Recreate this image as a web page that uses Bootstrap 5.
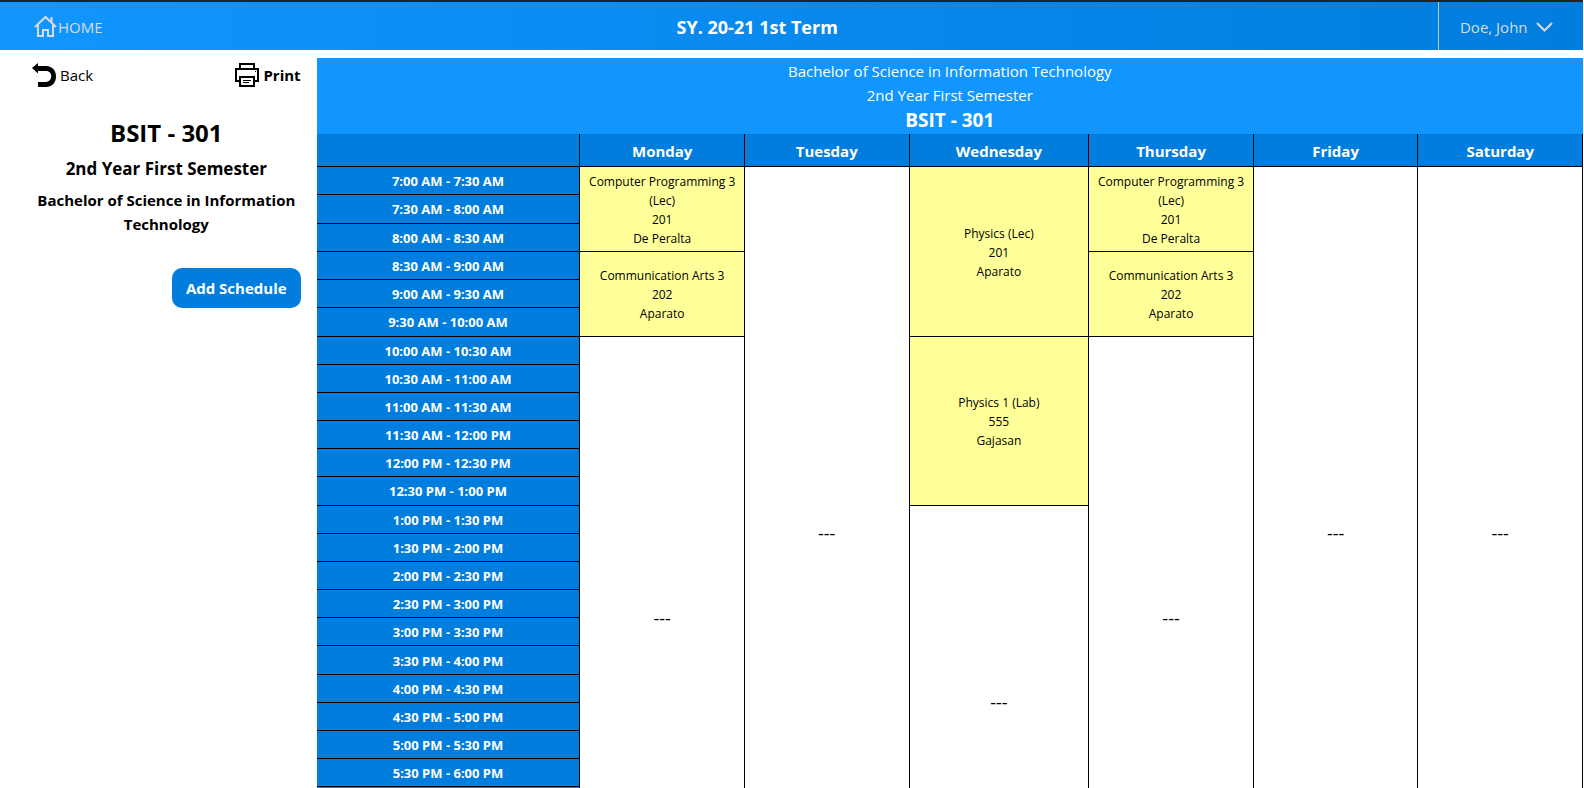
<!DOCTYPE html>
<html lang="en">
<head>
<meta charset="utf-8">
<meta name="viewport" content="width=device-width, initial-scale=1">
<title>Class Schedule</title>
<link href="https://cdn.jsdelivr.net/npm/bootstrap@5.3.0/dist/css/bootstrap.min.css" rel="stylesheet">
<style>
  :root { --brand: #007ddd; --brand-light: #1195ff; --slot: #ffff99; }
  html { scrollbar-width: none; }
  body { font-family: "Open Sans", "Noto Sans", sans-serif; font-size: 15px; line-height: 24px; color: #000; padding-right: 1px; }
  a, a:hover { color: inherit; text-decoration: none; }
  .topbar { height: 50px; padding-top: 2px; background: linear-gradient(to right, var(--brand-light), var(--brand)); border-top: 2px solid #1f2328; color: #d6dce2; }
  .home-side { width: 248px; padding-left: 33px; }
  .user-side { width: 20%; margin-top: -2px; }
  .term { font-size: 18px; }
  .user-menu { border-left: 1px solid #b9c4cf; color: inherit; background: none; width: 145px; padding: 2px 30px 0 21px; }
  .sidebar { width: 20%; padding: 5px 16px 16px 32px; }
  .section-name { font-size: 24px; line-height: 28px; margin-bottom: 11px; }
  .section-year { font-size: 17px; line-height: 22px; }
  .btn-schedule { background: var(--brand); color: #fff; font-size: 15px; line-height: 24px; border-radius: 10px; padding: 8px 14px; border: 0; }
  .title-block { background: var(--brand-light); color: #fff; padding-top: 1px; }
  .title-block .code { font-size: 19px; line-height: 27px; }
  .timetable { width: 100%; table-layout: fixed; border-collapse: collapse; text-align: center; height: 766px; }
  .timetable th, .timetable td { border: 1px solid #000; vertical-align: middle; padding: 2px 4px 0; }
  .timetable td { font-size: 18px; padding: 0 4px; }
  .timetable tr > th:first-child { border-left: 0; }
  .timetable thead th { height: 32px; border-top: 0; background: var(--brand); color: #fff; font-size: 15px; }
  .timetable tbody th { height: 28px; background: var(--brand); color: #fff; font-size: 13px; line-height: 19px; }
  .timetable td.slot { background: var(--slot); font-size: 12px; line-height: 19px; padding: 5px 4px 3px; }
  .col-time { width: 20.8%; }
  .col-day { width: 13%; }
  .col-day-wide { width: 14.2%; }
</style>
</head>
<body>
<header class="topbar d-flex align-items-stretch justify-content-between">
  <div class="home-side d-flex align-items-center">
    <a href="#" class="d-flex align-items-center">
      <svg width="25" height="24" viewBox="0 0 25 24" fill="none" stroke="currentColor" stroke-width="2" aria-hidden="true"><path d="M2 12 12.500 2 23 12M5 10v11h5v-6h5v6h5V10M18.500 2v5"/></svg>HOME</a>
  </div>
  <div class="term fw-bold text-white align-self-center">SY. 20-21 1st Term</div>
  <div class="user-side d-flex justify-content-end">
    <button type="button" class="user-menu border-top-0 border-end-0 border-bottom-0 d-flex align-items-center justify-content-between">Doe, John
      <svg width="17" height="12" viewBox="0 0 17 12" fill="none" stroke="currentColor" stroke-width="2" aria-hidden="true"><path d="M1 2l7.500 7.500L16 2"/></svg></button>
  </div>
</header>
<div class="d-flex pt-2">
  <aside class="sidebar flex-shrink-0">
    <div class="d-flex justify-content-between">
      <a href="#" class="d-flex align-items-center gap-1">
        <svg width="24" height="24" viewBox="0 0 24 24" aria-hidden="true"><path d="M0 5 6 0v3h9c12 1 12 20 0 21H6v-5h8c7-1 7-11 0-11H6v2.500z"/></svg>Back</a>
      <a href="#" class="d-flex align-items-center gap-1 fw-bold">
        <svg width="24" height="24" viewBox="0 0 24 24" fill="none" stroke="#000" stroke-width="2" aria-hidden="true"><path d="M5 6V1h14v5M5 18H1V6h22v12h-4M5 14h14v9H5z"/><path d="M8 17.500h8M8 19.500h6M20 8.500h1" stroke-width="1"/></svg>Print</a>
    </div>
    <div class="text-center fw-bold mt-4 pt-2">
      <h1 class="section-name fw-bold">BSIT - 301</h1>
      <h2 class="section-year fw-bold mb-2">2nd Year First Semester</h2>
      <div>Bachelor of Science in Information Technology</div>
    </div>
    <div class="text-end mt-4 pt-2"><button type="button" class="btn btn-schedule fw-bold">Add Schedule</button></div>
  </aside>
  <main class="flex-grow-1">
    <div class="title-block text-center">
      <div>Bachelor of Science in Information Technology</div>
      <div>2nd Year First Semester</div>
      <div class="code fw-bold">BSIT - 301</div>
    </div>
    <table class="timetable">
      <colgroup><col class="col-time"><col class="col-day"><col class="col-day"><col class="col-day-wide"><col class="col-day"><col class="col-day"><col class="col-day"></colgroup>
      <thead><tr><th></th><th scope="col">Monday</th><th scope="col">Tuesday</th><th scope="col">Wednesday</th><th scope="col">Thursday</th><th scope="col">Friday</th><th scope="col">Saturday</th></tr></thead>
      <tbody>
        <tr><th scope="row">7:00 AM - 7:30 AM</th>
          <td class="slot" rowspan="3">Computer Programming 3 (Lec)<br>201<br>De Peralta</td>
          <td rowspan="26">---</td>
          <td class="slot" rowspan="6">Physics (Lec)<br>201<br>Aparato</td>
          <td class="slot" rowspan="3">Computer Programming 3 (Lec)<br>201<br>De Peralta</td>
          <td rowspan="26">---</td>
          <td rowspan="26">---</td></tr>
        <tr><th scope="row">7:30 AM - 8:00 AM</th></tr>
        <tr><th scope="row">8:00 AM - 8:30 AM</th></tr>
        <tr><th scope="row">8:30 AM - 9:00 AM</th>
          <td class="slot" rowspan="3">Communication Arts 3<br>202<br>Aparato</td>
          <td class="slot" rowspan="3">Communication Arts 3<br>202<br>Aparato</td></tr>
        <tr><th scope="row">9:00 AM - 9:30 AM</th></tr>
        <tr><th scope="row">9:30 AM - 10:00 AM</th></tr>
        <tr><th scope="row">10:00 AM - 10:30 AM</th>
          <td rowspan="20">---</td>
          <td class="slot" rowspan="6">Physics 1 (Lab)<br>555<br>Gajasan</td>
          <td rowspan="20">---</td></tr>
        <tr><th scope="row">10:30 AM - 11:00 AM</th></tr>
        <tr><th scope="row">11:00 AM - 11:30 AM</th></tr>
        <tr><th scope="row">11:30 AM - 12:00 PM</th></tr>
        <tr><th scope="row">12:00 PM - 12:30 PM</th></tr>
        <tr><th scope="row">12:30 PM - 1:00 PM</th></tr>
        <tr><th scope="row">1:00 PM - 1:30 PM</th><td rowspan="14">---</td></tr>
        <tr><th scope="row">1:30 PM - 2:00 PM</th></tr>
        <tr><th scope="row">2:00 PM - 2:30 PM</th></tr>
        <tr><th scope="row">2:30 PM - 3:00 PM</th></tr>
        <tr><th scope="row">3:00 PM - 3:30 PM</th></tr>
        <tr><th scope="row">3:30 PM - 4:00 PM</th></tr>
        <tr><th scope="row">4:00 PM - 4:30 PM</th></tr>
        <tr><th scope="row">4:30 PM - 5:00 PM</th></tr>
        <tr><th scope="row">5:00 PM - 5:30 PM</th></tr>
        <tr><th scope="row">5:30 PM - 6:00 PM</th></tr>
        <tr><th scope="row">6:00 PM - 6:30 PM</th></tr>
        <tr><th scope="row">6:30 PM - 7:00 PM</th></tr>
        <tr><th scope="row">7:00 PM - 7:30 PM</th></tr>
        <tr><th scope="row">7:30 PM - 8:00 PM</th></tr>
      </tbody>
    </table>
  </main>
</div>
<script src="https://cdn.jsdelivr.net/npm/bootstrap@5.3.0/dist/js/bootstrap.bundle.min.js"></script>
</body>
</html>
